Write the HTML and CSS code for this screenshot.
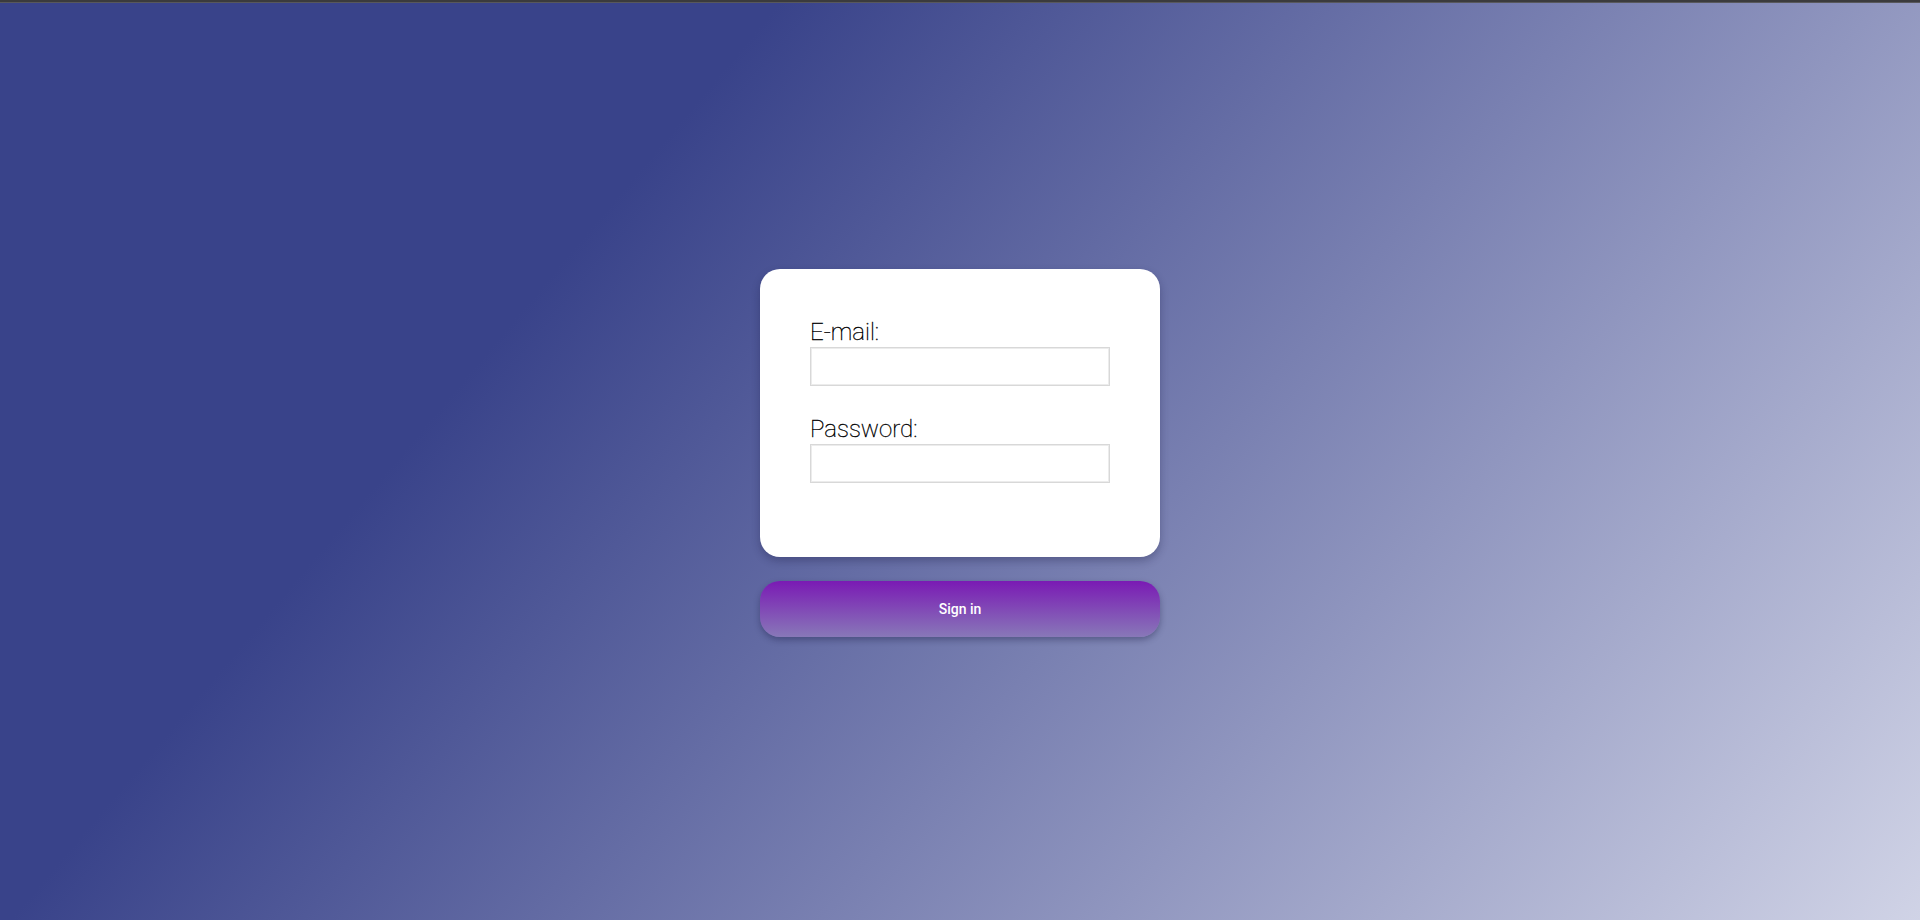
FILE: index.html
```html
<!DOCTYPE html>
<html lang="en">
<head>
<meta charset="utf-8">
<title>Sign in</title>
<link rel="stylesheet" href="styles.css">
</head>
<body>
<div class="topbar"></div>
<main class="page">
  <div class="stack">
    <form class="card">
      <label class="label" for="email">E-mail:</label>
      <input class="field" id="email" type="text">
      <label class="label label-second" for="password">Password:</label>
      <input class="field" id="password" type="password">
    </form>
    <button class="signin" type="button">Sign in</button>
  </div>
</main>
</body>
</html>
```

FILE: styles.css
```css
html, body {
  margin: 0;
  padding: 0;
  height: 100%;
}
body {
  display: flex;
  flex-direction: column;
  font-family: Roboto, "Liberation Sans", sans-serif;
  background: #39438a;
}
.topbar {
  height: 2px;
  background: #3b3b3d;
  border-bottom: 1px solid #58585c;
  flex: none;
}
.page {
  flex: 1;
  display: flex;
  align-items: center;
  justify-content: center;
  background: linear-gradient(130deg, #39438a 29%, #d0d3e6 100%);
}
.stack {
  width: 400px;
  display: flex;
  flex-direction: column;
  gap: 24px;
  margin-bottom: 17px;
}
.card {
  background: #fff;
  border-radius: 20px;
  box-shadow: 0 4px 8px rgba(20, 20, 60, 0.3);
  padding: 49px 50px 74px;
  display: flex;
  flex-direction: column;
  margin: 0;
}
.label {
  font-size: 24px;
  line-height: 28px;
  font-weight: 100;
  color: #000;
  -webkit-text-stroke: 0.35px #000;
  margin-bottom: 1px;
}
.label-second {
  margin-top: 29px;
}
.field {
  box-sizing: border-box;
  width: 300px;
  height: 39px;
  border: 1px solid #d8d8d8;
  box-shadow: inset 0 0 0 1px #ececec;
  background: #fff;
  margin: 0;
  padding: 0 6px;
  font: 16px Roboto, sans-serif;
  outline: none;
}
.signin {
  height: 56px;
  border: none;
  border-radius: 20px;
  background: linear-gradient(to bottom, #7a1ab4, #8878b8);
  box-shadow: 0 3px 6px rgba(20, 20, 60, 0.35);
  color: #fff;
  font-family: Roboto, "Liberation Sans", sans-serif;
  font-size: 14px;
  font-weight: 500;
  cursor: pointer;
}
```
